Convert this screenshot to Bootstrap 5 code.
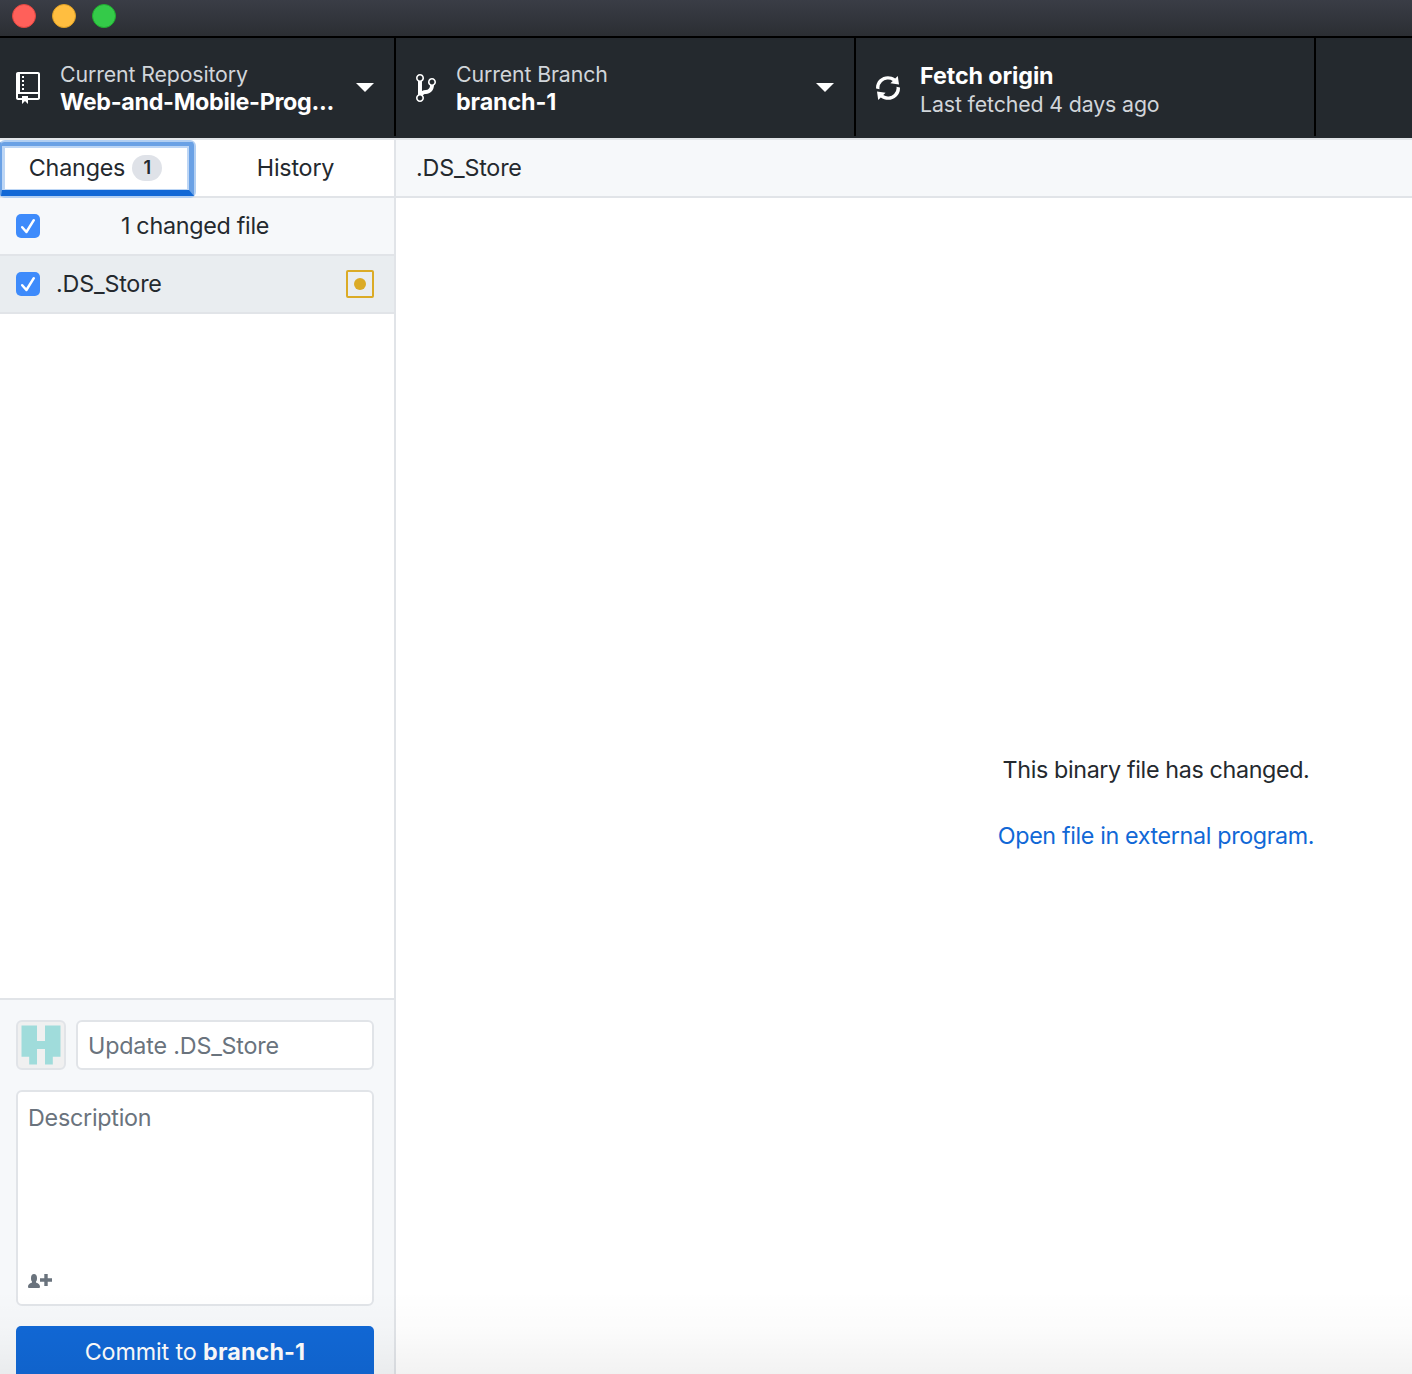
<!DOCTYPE html>
<html lang="en">
<head>
<meta charset="utf-8">
<meta name="viewport" content="width=device-width, initial-scale=1">
<title>GitHub Desktop</title>
<link href="https://cdn.jsdelivr.net/npm/bootstrap@5.3.0/dist/css/bootstrap.min.css" rel="stylesheet">
<style>
  :root { --line: #e1e4e8; --ink: #24292e; --soft: #f6f8fa; --blue: #1168d6; }
  body { font-family: Inter, "Liberation Sans", sans-serif; font-size: 23.3px; line-height: 28px; letter-spacing: -.18px; color: var(--ink); background: #fff; }
  svg { display: block; flex: none; fill: currentColor; }
  .window { height: 1374px; }

  .titlebar { height: 38px; padding: 4px 12px 0; gap: 16px; background: linear-gradient(#3a3d46, #2b2e33 36px); border-bottom: 2px solid #000; }
  .light { width: 24px; height: 24px; border-radius: 50%; border: 1px solid; }
  .light-close { background: #ff605a; border-color: #e2463f; }
  .light-min { background: #ffbe40; border-color: #dfa023; }
  .light-max { background: #34ca49; border-color: #1fad2e; }

  .toolbar { height: 100px; padding-bottom: 2px; background: var(--ink); color: #fff; }
  .tool { width: 460px; border-right: 2px solid #000; padding: 0 20px; }
  .tool-repo { width: 396px; padding-left: 16px; }
  .tool-icon { margin: 2px 20px 0 0; }
  .tool-label { font-size: 21.3px; color: #d1d5da; line-height: 28px; letter-spacing: -.12px; }
  .tool-value { font-weight: 650; line-height: 27px; letter-spacing: -.1px; }
  .tool-repo .tool-value { letter-spacing: -.3px; }
  .tool-fetch { padding-top: 7px; }
  .tool-fetch .tool-label { line-height: 30px; }
  .caret { width: 18px; height: 9px; }

  .sidebar { width: 396px; border-right: 2px solid var(--line); }
  .tabs { height: 60px; border-top: 2px solid var(--line); border-bottom: 2px solid var(--line); }
  .tab { padding: 0; border: 0; background: #fff; color: var(--ink); letter-spacing: -.2px; }
  .tab-current { width: 194px; padding-right: 3px; }
  .tab-history { width: 200px; padding-left: 3px; }
  .focus-frame { left: -1px; right: -2px; top: 0; bottom: -2px; border: 2px solid #b2cff2; border-left-color: #6aa1e5; border-radius: 6px; }
  .focus-frame::before { content: ""; position: absolute; inset: 0; border: 5px solid #6aa1e5; border-left-width: 1px; border-top-width: 4px; border-bottom: 6px solid var(--blue); border-radius: 3px 3px 0 0; }
  .focus-frame::after { content: ""; position: absolute; inset: 4px 5px 6px 1px; border: 2px solid #bdd6f5; border-left-width: 3px; border-bottom-width: 1px; }
  .counter { width: 30px; height: 26px; border-radius: 13px; background: #dfe2e8; font-size: 18px; font-weight: 600; line-height: 26px; margin-left: 7px; }
  .list-line { height: 58px; padding: 0 20px 0 16px; border-bottom: 2px solid var(--line); }
  .list-head { background: var(--soft); }
  .list-selected { background: #e9edf0; }
  .list-count { margin-right: 24px; letter-spacing: -.28px; }
  .tick { width: 24px; height: 24px; border-radius: 5px; background: #3e8bfb; flex: none; }
  .tick path { fill: none; stroke: #fff; stroke-width: 2.5; stroke-linecap: round; stroke-linejoin: round; }

  .commit { height: 376px; padding: 20px 20px 0 16px; border-top: 2px solid var(--line); background: var(--soft); }
  .commit-summary { gap: 10px; }
  .avatar { width: 50px; height: 50px; border: 2px solid var(--line); border-radius: 6px; background: #f0f0f0; }
  .field { border: 2px solid var(--line); border-radius: 6px; background: #fff; color: #6a737d; padding: 10px; line-height: 26px; }
  .field-title { height: 50px; line-height: 27px; }
  .field-text { height: 216px; margin-top: 20px; padding: 13px 10px 16px; letter-spacing: -.25px; }
  .btn-commit { height: 58px; margin-top: 20px; padding: 0 0 7px; border: 0; border-radius: 5px; background: var(--blue); color: #fff; letter-spacing: -.12px; }
  .btn-commit b { font-weight: 650; letter-spacing: .15px; }

  .file-head { height: 60px; padding: 0 20px; border-top: 2px solid var(--line); border-bottom: 2px solid var(--line); background: var(--soft); }
  .notice { width: 1520px; padding-top: 34px; gap: 38px; letter-spacing: -.36px; }
  .notice a { color: var(--blue); }
  .edge-shade { left: 0; right: 0; bottom: 0; height: 84px; background: linear-gradient(rgba(0,0,0,0), rgba(0,0,0,.015) 50%, rgba(0,0,0,.05)); pointer-events: none; }
</style>
<script src="https://cdn.jsdelivr.net/npm/bootstrap@5.3.0/dist/js/bootstrap.bundle.min.js"></script>
</head>
<body>
<div class="window d-flex flex-column overflow-hidden position-relative">
  <div class="titlebar d-flex flex-shrink-0">
    <span class="light light-close"></span><span class="light light-min"></span><span class="light light-max"></span>
  </div>

  <header class="toolbar d-flex flex-shrink-0">
    <div class="tool tool-repo d-flex align-items-center flex-shrink-0">
      <svg class="tool-icon" width="24" height="32" viewBox="0 0 12 16"><path fill-rule="evenodd" d="M4 9H3V8h1v1zm0-3H3v1h1V6zm0-2H3v1h1V4zm0-2H3v1h1V2zm8-1v12c0 .55-.45 1-1 1H6v2l-1.5-1.5L3 16v-2H1c-.55 0-1-.45-1-1V1c0-.55.45-1 1-1h10c.55 0 1 .45 1 1zm-1 10H1v2h2v-1h3v1h5v-2zm0-10H2v9h9V1z"/></svg>
      <div class="flex-grow-1 text-nowrap">
        <div class="tool-label">Current Repository</div>
        <div class="tool-value">Web-and-Mobile-Prog...</div>
      </div>
      <svg class="caret" viewBox="0 0 18 9"><path d="M0 0h18L9 9z"/></svg>
    </div>
    <div class="tool d-flex align-items-center flex-shrink-0">
      <svg class="tool-icon" width="20" height="32" viewBox="0 0 10 16"><path fill-rule="evenodd" d="M10 5c0-1.11-.89-2-2-2a1.993 1.993 0 0 0-1 3.72v.3c-.02.52-.23.98-.63 1.38-.4.4-.86.61-1.38.63-.83.02-1.48.16-2 .45V4.72a1.993 1.993 0 0 0-1-3.72C.88 1 0 1.89 0 3a2 2 0 0 0 1 1.72v6.56c-.59.35-1 .99-1 1.72 0 1.11.89 2 2 2 1.11 0 2-.89 2-2 0-.53-.2-1-.53-1.36.09-.06.48-.41.59-.47.25-.11.56-.17.94-.17 1.05-.05 1.95-.45 2.75-1.25S8.95 7.77 9 6.73h-.02C9.59 6.37 10 5.73 10 5zM2 1.8c.66 0 1.2.55 1.2 1.2 0 .65-.55 1.2-1.2 1.2C1.35 4.2.8 3.65.8 3c0-.65.55-1.2 1.2-1.2zm0 12.41c-.66 0-1.2-.55-1.2-1.2 0-.65.55-1.2 1.2-1.2.65 0 1.2.55 1.2 1.2 0 .65-.55 1.2-1.2 1.2zm6-8c-.66 0-1.2-.55-1.2-1.2 0-.65.55-1.2 1.2-1.2.65 0 1.2.55 1.2 1.2 0 .65-.55 1.2-1.2 1.2z"/></svg>
      <div class="flex-grow-1">
        <div class="tool-label">Current Branch</div>
        <div class="tool-value">branch-1</div>
      </div>
      <svg class="caret" viewBox="0 0 18 9"><path d="M0 0h18L9 9z"/></svg>
    </div>
    <div class="tool d-flex align-items-center flex-shrink-0">
      <svg class="tool-icon" width="24" height="32" viewBox="0 0 12 16"><path fill-rule="evenodd" d="M10.24 7.4a4.15 4.15 0 0 1-1.2 3.6 4.346 4.346 0 0 1-5.41.54L4.8 10.4.5 9.8l.6 4.2 1.31-1.26c2.36 1.74 5.7 1.57 7.84-.54a5.876 5.876 0 0 0 1.74-4.46l-1.75-.34zM2.96 5a4.346 4.346 0 0 1 5.41-.54L7.2 5.6l4.3.6-.6-4.2-1.31 1.26c-2.36-1.74-5.7-1.57-7.85.54C.5 5.03-.06 6.65.01 8.26l1.75.35A4.17 4.17 0 0 1 2.96 5z"/></svg>
      <div class="tool-fetch">
        <div class="tool-value">Fetch origin</div>
        <div class="tool-label">Last fetched 4 days ago</div>
      </div>
    </div>
  </header>

  <div class="d-flex flex-grow-1">
    <aside class="sidebar d-flex flex-column flex-shrink-0">
      <div class="tabs d-flex flex-shrink-0">
        <button class="tab tab-current d-flex align-items-center justify-content-center position-relative">
          Changes<span class="counter text-center">1</span>
          <span class="focus-frame position-absolute"></span>
        </button>
        <button class="tab tab-history">History</button>
      </div>
      <div class="list-line list-head d-flex align-items-center flex-shrink-0">
        <span class="tick"><svg width="24" height="24" viewBox="0 0 24 24"><path d="M6.2 13.2l4.2 4.8 7.4-11.8"/></svg></span>
        <span class="list-count flex-grow-1 text-center">1 changed file</span>
      </div>
      <div class="list-line list-selected d-flex align-items-center flex-shrink-0">
        <span class="tick"><svg width="24" height="24" viewBox="0 0 24 24"><path d="M6.2 13.2l4.2 4.8 7.4-11.8"/></svg></span>
        <span class="flex-grow-1 ms-3">.DS_Store</span>
        <svg width="28" height="28" viewBox="0 0 28 28"><rect x="1" y="1" width="26" height="26" rx="1" fill="none" stroke="#dbab26" stroke-width="2"/><circle cx="14" cy="14" r="6" fill="#dbab26"/></svg>
      </div>
      <div class="flex-grow-1"></div>
      <div class="commit flex-shrink-0">
        <div class="commit-summary d-flex">
          <div class="avatar flex-shrink-0"><svg width="46" height="46" viewBox="0 0 46 46"><path fill="#a0dcdb" d="M3.5 3.5H19V19h8V3.500h15.500v31.200h-7.700v7.800H27V27h-8v15.500h-7.800v-7.800H3.500z"/></svg></div>
          <div class="field field-title flex-grow-1">Update .DS_Store</div>
        </div>
        <div class="field field-text d-flex flex-column justify-content-between">
          <span>Description</span>
          <svg width="24" height="14" viewBox="0 0 24 14"><path d="M12 12.700c0 .8-.5 1.300-1.300 1.300H1.300C.5 14 0 13.500 0 12.700c0-2.700 3-3.500 4-4.100V7.500C3.300 6.800 3 5.800 3 4 3 1.300 4.200 0 6 0s3 1.300 3 4c0 1.800-.3 2.800-1 3.500v1.100c1 .6 4 1.400 4 4.100z"/><path d="M16.300 0h3.400v4.300H24v3.400h-4.300V12h-3.400V7.700H12V4.300h4.300z"/></svg>
        </div>
        <button class="btn-commit w-100">Commit to <b>branch-1</b></button>
      </div>
    </aside>

    <main class="flex-grow-1 d-flex flex-column overflow-hidden">
      <div class="file-head d-flex align-items-center flex-shrink-0">.DS_Store</div>
      <div class="notice flex-grow-1 d-flex flex-column align-items-center justify-content-center">
        <div>This binary file has changed.</div>
        <a class="text-decoration-none" href="#">Open file in external program.</a>
      </div>
    </main>
  </div>
  <div class="edge-shade position-absolute"></div>
</div>
</body>
</html>
